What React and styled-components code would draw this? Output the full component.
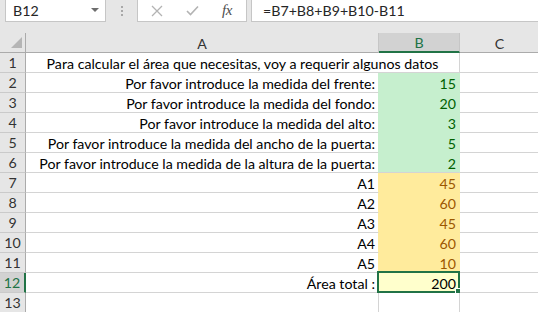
import React from 'react';
import styled, { createGlobalStyle } from 'styled-components';

const GREEN = '#217346';
const HEADER_BG = '#e6e6e6';
const GRID = '#d4d4d4';
const FS = '14.2px';

const GlobalStyle = createGlobalStyle`
  html, body { margin: 0; padding: 0; background: #fff; overflow: hidden; }
  body { font-family: Lato, "Liberation Sans", sans-serif; }
  * { box-sizing: border-box; }
`;

const Page = styled.div`
  width: 538px;
  height: 312px;
  overflow: hidden;
  background: #fff;
`;

const TopBar = styled.div`
  height: 33px;
  background: ${HEADER_BG};
  display: flex;
  align-items: flex-start;
`;

const Box = styled.div`
  height: 22px;
  background: #fff;
  border: 1px solid #c6c6c6;
  border-top: none;
  display: flex;
  align-items: center;
`;

const NameBox = styled(Box)`
  margin-left: 5px;
  width: 101px;
  justify-content: space-between;
  padding: 0 6px 0 7px;
  font-size: ${FS};
  color: #262626;
`;

const Caret = styled.span`
  width: 0;
  height: 0;
  border-left: 4px solid transparent;
  border-right: 4px solid transparent;
  border-top: 4px solid #6d6d6d;
  margin-top: -2px;
`;

const Gripper = styled.div`
  width: 31px;
  height: 22px;
  display: flex;
  flex-direction: column;
  align-items: center;
  justify-content: center;
  gap: 2px;
`;

const Dot = styled.span`
  width: 2px;
  height: 2px;
  background: #a8a8a8;
`;

const IconBox = styled(Box)`
  width: 110px;
  padding-left: 13px;
`;

const IconSlot = styled.div`
  width: ${p => p.$w}px;
  display: flex;
  align-items: center;
  justify-content: flex-start;
`;

const Fx = styled.span`
  font-family: "Liberation Serif", serif;
  font-style: italic;
  font-size: 15px;
  color: #4d4d4d;
  letter-spacing: -0.5px;
`;

const FormulaBox = styled(Box)`
  margin-left: 4px;
  flex: 1;
  border-right: none;
  padding-left: 11px;
  font-size: ${FS};
  color: #262626;
`;

const Grid = styled.div`
  display: grid;
  grid-template-columns: 26px 353px 81px 80px;
  grid-auto-rows: 20px;
`;

const Corner = styled.div`
  background: ${HEADER_BG};
  border-right: 1px solid #ababab;
  border-bottom: 1px solid #ababab;
  display: flex;
  align-items: flex-end;
  justify-content: flex-end;
  padding: 0 3px 4px 0;
`;

const ColHead = styled.div`
  background: ${p => (p.$sel ? '#d2d2d2' : HEADER_BG)};
  color: ${p => (p.$sel ? GREEN : '#333')};
  border-right: 1px solid #c6c6c6;
  border-bottom: ${p => (p.$sel ? `2px solid ${GREEN}` : '1px solid #ababab')};
  display: flex;
  align-items: center;
  justify-content: center;
  font-size: ${FS};
  padding-top: 1px;
`;

const RowHead = styled.div`
  background: ${p => (p.$sel ? '#d2d2d2' : HEADER_BG)};
  color: ${p => (p.$sel ? GREEN : '#333')};
  border-right: ${p => (p.$sel ? `2px solid ${GREEN}` : '1px solid #ababab')};
  border-bottom: 1px solid #cacaca;
  display: flex;
  align-items: center;
  justify-content: center;
  font-size: ${FS};
  line-height: 20px;
  padding-top: 1px;
`;

const Cell = styled.div`
  position: relative;
  grid-column: span ${p => p.$span || 1};
  background: ${p => p.$bg || '#fff'};
  color: ${p => p.$color || '#000'};
  border-right: 1px solid ${p => p.$edge || GRID};
  border-bottom: 1px solid ${p => p.$bottom || GRID};
  font-size: ${FS};
  line-height: 19px;
  padding: 1px 3px 0 3px;
  text-align: ${p => p.$align || 'left'};
  white-space: nowrap;
`;

const Selection = styled.div`
  position: absolute;
  left: -2px;
  top: -2px;
  right: -1px;
  bottom: -1px;
  border: 2px solid ${GREEN};
  pointer-events: none;
`;

const Handle = styled.div`
  position: absolute;
  right: -4px;
  bottom: -4px;
  width: 7px;
  height: 7px;
  background: ${GREEN};
  border: 1px solid #fff;
`;

const greenFill = '#c6efce';
const yellowFill = '#ffeb9c';

const rows = [
  { n: 1, merged: 'Para calcular el área que necesitas, voy a requerir algunos datos' },
  { n: 2, a: 'Por favor introduce la medida del frente:', b: '15', kind: 'g' },
  { n: 3, a: 'Por favor introduce la medida del fondo:', b: '20', kind: 'g' },
  { n: 4, a: 'Por favor introduce la medida del alto:', b: '3', kind: 'g' },
  { n: 5, a: 'Por favor introduce la medida del ancho de la puerta:', b: '5', kind: 'g' },
  { n: 6, a: 'Por favor introduce la medida de la altura de la puerta:', b: '2', kind: 'g', last: true },
  { n: 7, a: 'A1', b: '45', kind: 'y' },
  { n: 8, a: 'A2', b: '60', kind: 'y' },
  { n: 9, a: 'A3', b: '45', kind: 'y' },
  { n: 10, a: 'A4', b: '60', kind: 'y' },
  { n: 11, a: 'A5', b: '10', kind: 'y', last: true },
  { n: 12, a: 'Área total :', b: '200', kind: 's' },
  { n: 13 },
];

function fillFor(kind) {
  if (kind === 'g') return { bg: greenFill, color: '#006100' };
  if (kind === 'y') return { bg: yellowFill, color: '#9c5700' };
  if (kind === 's') return { bg: '#ffffcc', color: '#000' };
  return null;
}

function XIcon() {
  return (
    <svg width="12" height="12" viewBox="0 0 12 12">
      <path d="M1 1 L11 11 M11 1 L1 11" stroke="#b3b3b3" strokeWidth="1.3" fill="none" />
    </svg>
  );
}

function CheckIcon() {
  return (
    <svg width="13" height="11" viewBox="0 0 13 11">
      <path d="M1 6 L4.5 9.5 L12 1.5" stroke="#b3b3b3" strokeWidth="1.6" fill="none" />
    </svg>
  );
}

function CornerTriangle() {
  return (
    <svg width="11" height="11" viewBox="0 0 11 11">
      <polygon points="11,0 11,11 0,11" fill="#b5b5b5" />
    </svg>
  );
}

export default function App() {
  return (
    <Page>
      <GlobalStyle />
      <TopBar>
        <NameBox>
          <span>B12</span>
          <Caret />
        </NameBox>
        <Gripper>
          <Dot />
          <Dot />
          <Dot />
        </Gripper>
        <IconBox>
          <IconSlot $w={35}><XIcon /></IconSlot>
          <IconSlot $w={36}><CheckIcon /></IconSlot>
          <IconSlot $w={20}><Fx>fx</Fx></IconSlot>
        </IconBox>
        <FormulaBox>=B7+B8+B9+B10-B11</FormulaBox>
      </TopBar>
      <Grid>
        <Corner><CornerTriangle /></Corner>
        <ColHead>A</ColHead>
        <ColHead $sel>B</ColHead>
        <ColHead>C</ColHead>
        {rows.map(r => {
          const f = fillFor(r.kind);
          const sel = r.kind === 's';
          return (
            <React.Fragment key={r.n}>
              <RowHead $sel={sel}>{r.n}</RowHead>
              {r.merged ? (
                <Cell $span={2} $align="center">{r.merged}</Cell>
              ) : (
                <>
                  <Cell $align="right" $edge={f && !sel ? f.bg : undefined}>{r.a}</Cell>
                  <Cell
                    $align="right"
                    $bg={f ? f.bg : undefined}
                    $color={f ? f.color : undefined}
                    $edge={f && !sel ? f.bg : undefined}
                    $bottom={f && !sel && !r.last ? f.bg : undefined}
                  >
                    {r.b}
                    {sel && (
                      <Selection>
                        <Handle />
                      </Selection>
                    )}
                  </Cell>
                </>
              )}
              <Cell />
            </React.Fragment>
          );
        })}
      </Grid>
    </Page>
  );
}
